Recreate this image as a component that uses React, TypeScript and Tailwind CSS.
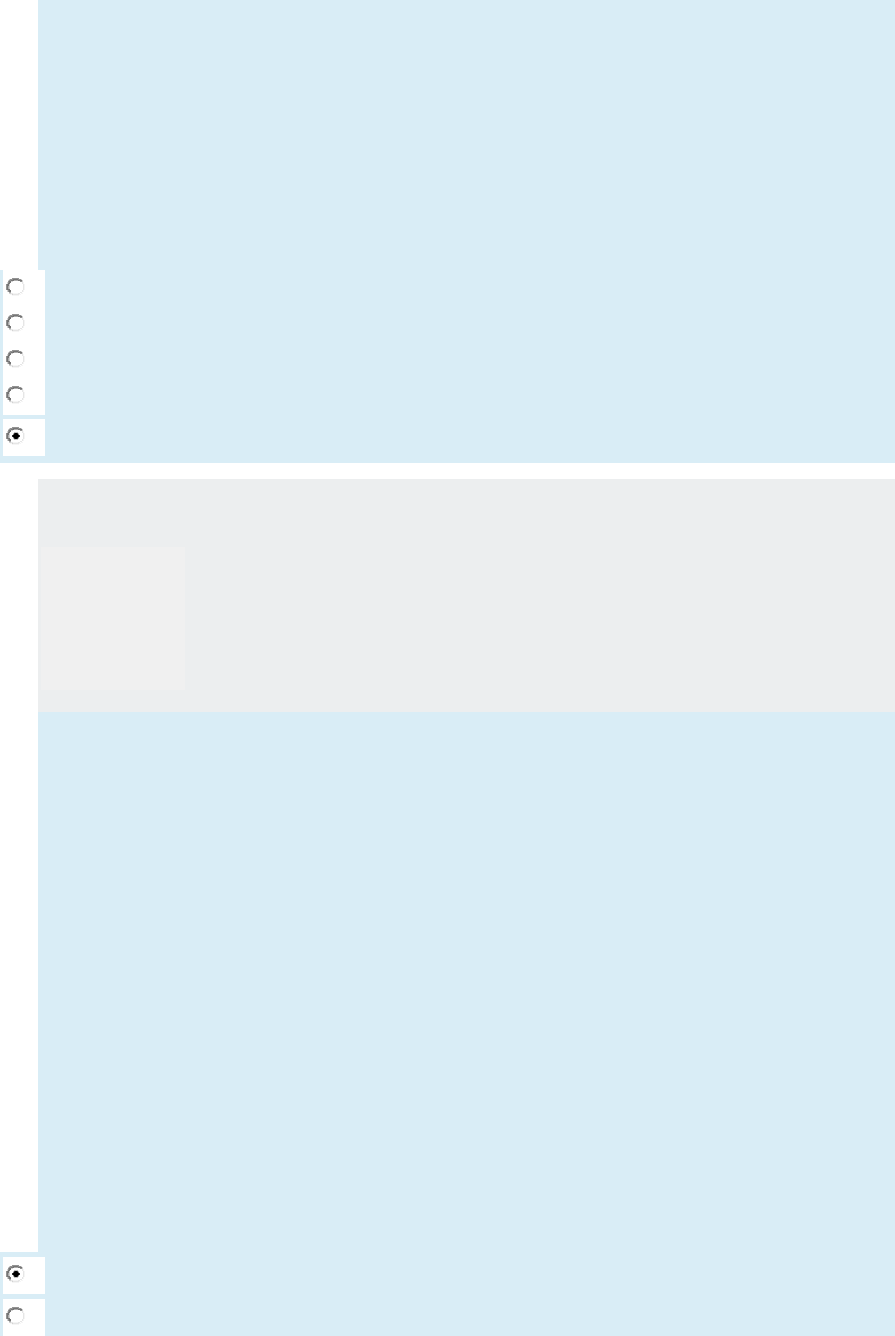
type RadioProps = {
  checked?: boolean;
};

function Radio({ checked = false }: RadioProps) {
  return (
    <svg
      role="radio"
      aria-checked={checked}
      viewBox="0 0 19 18"
      shapeRendering="crispEdges"
      className="block h-[18px] w-[19px]"
    >
      {/* sunken edge, lit from the lower right */}
      <path fill="#d2d2d2" d="M3 1h2v1H3zM2 2h1v1H2zM1 4h1v2H1zM1 12h1v2H1zM16 2h1v2h-1zM14 1h2v1h-2zM3 15h2v1H3zM5 3h2v1H5zM3 6h1v6H3zM6 16h1v1H6z" />
      <path fill="#929292" d="M6 0h7v1H6zM4 1h3v1H4zM12 1h3v1h-3zM3 2h2v1H3zM2 3h1v3H2zM0 6h1v6H0zM2 12h1v2H2zM14 3h2v1h-2z" />
      <path fill="#757575" d="M7 1h5v1H7zM5 2h3v1H5zM12 2h4v1h-4zM3 3h2v2H3zM2 5h2v1H2zM1 6h2v2H1zM1 8h1v3H1zM1 11h3v1H1zM3 12h2v2H3z" />
      <path fill="#ababab" d="M8 2h4v1H8zM2 8h1v3H2zM3 14h2v1H3z" />
      <path fill="#e6e6e6" d="M16 4h1v2h-1zM17 6h1v6h-1zM16 12h1v2h-1zM14 14h2v1h-2zM12 15h2v1h-2zM7 16h6v1H7zM5 15h2v1H5z" />
      <path fill="#f5f5f5" d="M18 6h1v6h-1zM17 4h1v2h-1zM17 12h1v2h-1zM15 15h2v1h-2zM13 16h2v1h-2zM6 17h7v1H6zM4 16h2v1H4zM7 15h5v1H7z" />
      {checked && (
        <>
          <path fill="#6b6b6b" d="M7 7h1v1H7zM12 7h1v1h-1zM7 10h1v1H7zM12 10h1v1h-1z" />
          <path fill="#c4c4c4" d="M8 5h4v1H8zM8 12h4v1H8zM7 6h1v1H7zM12 6h1v1h-1zM7 11h1v1H7zM12 11h1v1h-1z" />
          <path fill="#000" d="M9 6h2v1H9zM8 7h4v1H8zM7 8h6v2H7zM8 10h4v1H8zM9 11h2v1H9z" />
          <path fill="#333" d="M8 6h1v1H8zM11 6h1v1h-1zM6 8h1v2H6zM13 8h1v2h-1zM8 11h1v1H8zM11 11h1v1h-1z" />
        </>
      )}
    </svg>
  );
}

function Option({ checked }: RadioProps) {
  return (
    <div className="h-[37px] w-[42px] bg-white pt-2 pl-[3px]">
      <Radio checked={checked} />
    </div>
  );
}

export default function App() {
  return (
    <main className="h-[1336px] w-[895px] overflow-hidden bg-[#d9edf6]">
      <section className="h-[463px]">
        <div className="h-[270px] w-[38px] bg-white" />
        <div className="flex flex-col gap-1 pl-[3px]">
          <div className="flex h-[145px] w-[42px] flex-col gap-[18px] bg-white pt-2 pl-[3px]">
            <Radio />
            <Radio />
            <Radio />
            <Radio />
          </div>
          <Option checked />
        </div>
      </section>

      <div className="h-4 bg-white" />

      <section className="flex h-[773px]">
        <div className="w-[38px] bg-white" />
        <div className="flex-1">
          <div className="h-[233px] bg-[#eceeef] pt-[68px] pl-[3px]">
            <div className="h-[143px] w-36 bg-[#f0f0f0]" />
          </div>
        </div>
      </section>

      <section className="flex flex-col gap-[5px] pt-[5px] pl-[3px]">
        <Option checked />
        <Option />
      </section>
    </main>
  );
}
